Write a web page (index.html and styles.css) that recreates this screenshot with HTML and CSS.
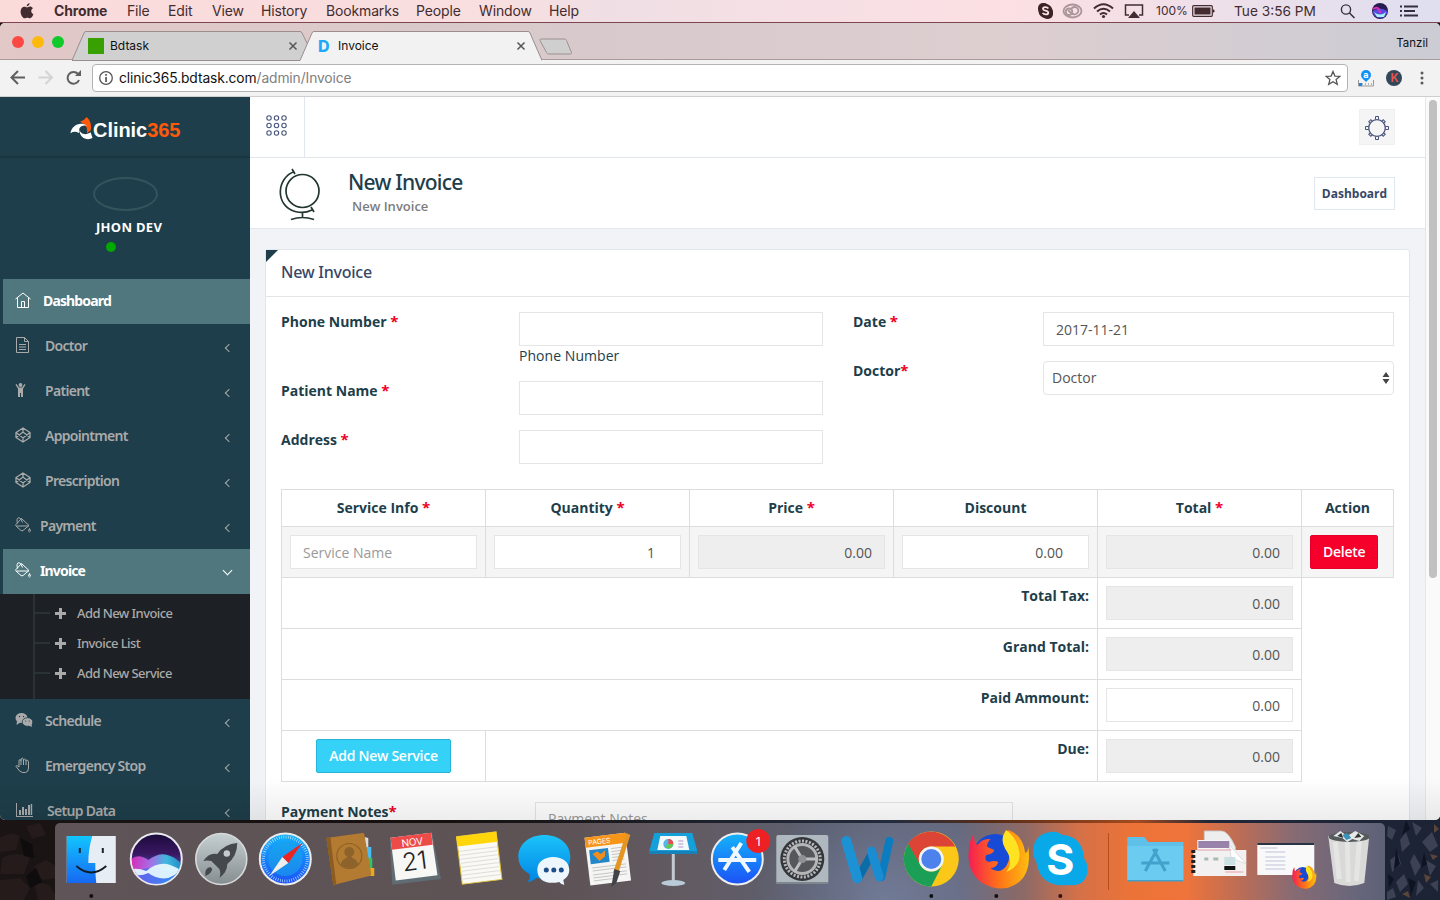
FILE: index.html
```html
<!DOCTYPE html>
<html lang="en">
<head>
<meta charset="utf-8">
<title>Invoice</title>
<link rel="stylesheet" href="styles.css">
</head>
<body>
<div class="desktop">
<svg class="wallpaper" viewBox="0 0 1440 82" preserveAspectRatio="none">
  <defs><linearGradient id="wp"><stop offset="0" stop-color="#1a1415"/><stop offset=".3" stop-color="#15100f"/><stop offset=".62" stop-color="#232c3d"/><stop offset=".69" stop-color="#5a2c18"/><stop offset=".79" stop-color="#a34a20"/><stop offset=".84" stop-color="#1f2738"/><stop offset="1" stop-color="#1c2334"/></linearGradient></defs>
  <path fill="url(#wp)" d="M0 0h1440v82H0z"/>
  <g fill="#241b1a"><path d="M0 20q10-8 20-2l-4 14-16 2zM2 40q14-8 28 0l-6 16H0zM34 48l12-6 10 6v12l-14 2zM0 62l20-2 10 10-6 12H0zM34 64l14 2 7 10v6H38zM26 8l14-3 6 12-14 4z"/></g>
  <g fill="#0f0c0d"><path d="M20 20l12 6 2 14-10-2zM26 58l10-8 6 14-12 6z"/></g>
  <g fill="#3c4254"><path d="M1388 8l8 4-4 10-5-4zM1400 22l6-8 4 12-8 8zM1412 4l10 6-6 8zM1422 24l10-10 6 14-8 6zM1390 42l8-6 3 10-9 8zM1410 44l4-8 7 12-6 10zM1426 42l10 6-6 10zM1396 64l8-8 4 10-8 8zM1418 62l6 8-8 8zM1430 66l8-4v12zM1387 74l6-4 3 9-9 3z"/></g>
  <g fill="#0f1422"><path d="M1396 30l4 16-6 6zM1406 2l4 9-8 6zM1408 60l8 4-5 14zM1424 34l3 12-6 4zM1388 56l6 5-5 9z"/></g>
  <g fill="#5b4438"><path d="M1424 56l7 3-5 6zM1434 6l5 5-5 4zM1402 76l6-3 2 7zM1430 36l8 2-5 4z"/></g>
</svg>

<header class="menubar">
  <svg class="apple" viewBox="0 0 14 17"><path fill="#432c30" d="M9.6 0c.1 1.500-1.300 3.300-2.900 3.300C6.500 1.800 8 .2 9.600 0zM7 4.400c.7 0 1.600-.8 3-.8 1 0 2.200.6 2.900 1.600-2.500 1.500-2 4.900.6 5.900-.5 1.500-2 4.200-3.500 4.200-1 0-1.500-.6-2.700-.6-1.200 0-1.700.6-2.700.6C2.900 15.300.6 11.800.6 8.700c0-3.300 1.900-5 3.800-5 1.100 0 2 .7 2.600.7z"/></svg>
  <nav class="menus"><b>Chrome</b><span>File</span><span>Edit</span><span>View</span><span>History</span><span>Bookmarks</span><span>People</span><span>Window</span><span>Help</span></nav>
  <svg class="status" viewBox="0 0 120 22">
    <rect x="1" y="3" width="11" height="11" rx="5" fill="#3c2426"/><rect x="5" y="7" width="11" height="12" rx="5" fill="#3c2426"/><circle cx="8.500" cy="11" r="7" fill="#3c2426"/><path d="M11.300 8.500C10 6.500 6 6.800 6 8.900c0 2.300 5.300 1.300 5.300 3.800 0 2.200-4.300 2.400-5.600.2" fill="none" stroke="#fbe3e3" stroke-width="1.800"/>
    <g fill="none" stroke="#ab9598" stroke-width="1.800"><ellipse cx="35.500" cy="11" rx="9" ry="6.500"/><circle cx="32" cy="11.800" r="3.300"/><path d="M34 9c3-4 9-1 7 3-1 3-5 3-7 1l-3-3"/></g>
    <g fill="none" stroke="#432c30" stroke-width="2"><path d="M57 8.500q9.500-8.500 19 0M60 11.500q6.500-5.500 13 0M63 14.500q3.500-3 7 0"/></g><circle cx="66.500" cy="16.500" r="1.600" fill="#432c30"/>
    <path d="M92 15h-3.500V5h17v10H102" fill="none" stroke="#432c30" stroke-width="1.500"/><path d="M97 11l6 7H91z" fill="#432c30"/>
  </svg>
  <span class="percent">100%</span>
  <svg class="battery" viewBox="0 0 24 14"><rect x=".7" y="1.700" width="19.600" height="10.600" rx="1" fill="none" stroke="#432c30" stroke-width="1.200"/><path d="M2.500 3.500h16v7h-16zM21 5l2 2-2 2z" fill="#432c30"/></svg>
  <span class="clock">Tue 3:56 PM</span>
  <svg class="tools" viewBox="0 0 82 22"><circle cx="6" cy="9.500" r="4.600" fill="none" stroke="#383040" stroke-width="1.400"/><path d="M9.500 13l5 5" stroke="#383040" stroke-width="1.600"/><circle cx="40" cy="11" r="8" fill="#291c50"/><path d="M32.500 11q7-5 15 0-1 7-8 7-6-1-7-7" fill="#5b4ae0"/><path d="M34 12q6 5 12 0l-2 5h-7z" fill="#a6f3f8"/><path d="M33 9q6-4 7 4" stroke="#e02eb5" fill="none" stroke-width="2"/><g stroke="#342f40" stroke-width="2"><path d="M64 6.500h14M64 11h11M64 15.500h14M60 6.500h2M60 11h2M60 15.500h2"/></g></svg>
</header>

<div class="window">
  <div class="tabstrip">
    <div class="lights"><i class="red"></i><i class="yellow"></i><i class="green"></i></div>
    <div class="tab">
      <svg class="tabshape" viewBox="0 0 236 30"><path d="M0 29.500L12 2q.5-1.500 2-1.500h214q1.500 0 2 1.500l6 12-7 15.500z" fill="#d0d0d0" stroke="#9b8c8e"/></svg>
      <i class="square"></i><span class="title">Bdtask</span><svg class="x" viewBox="0 0 10 10"><path d="M1.500 1.500l7 7M8.500 1.500l-7 7"/></svg>
    </div>
    <div class="tab current">
      <svg class="tabshape" viewBox="0 0 242 30"><path d="M0 29.500L12 2q.5-1.500 2-1.500h214q1.500 0 2 1.500l12 27.500V30H0z" fill="#f2f2f2"/><path d="M0 29.500L12 2q.5-1.500 2-1.500h214q1.500 0 2 1.500l12 27.500" fill="none" stroke="#9b8c8e"/></svg>
      <b class="dlogo">D</b><span class="title">Invoice</span><svg class="x" viewBox="0 0 10 10"><path d="M1.500 1.500l7 7M8.500 1.500l-7 7"/></svg>
    </div>
    <svg class="newtab" viewBox="0 0 34 18"><path d="M2.500 1h23q1.500 0 2 1.500l5 12q.5 1.500-1 1.500H10q-2 0-2.500-1.500L1 2.500Q.6 1 2.500 1z" fill="#cfcfcf" stroke="#9b9092"/></svg>
    <span class="profile">Tanzil</span>
  </div>
  <div class="toolbar">
    <svg class="navicons" viewBox="0 0 82 36"><g fill="none" stroke-width="2"><path d="M25 17.500H12M18 11l-6.500 6.500L18 24" stroke="#5f5f5f"/><path d="M38.500 17.500h13M45.500 11l6.500 6.500-6.500 6.500" stroke="#d3d3d3"/><path d="M79 20a5.900 5.900 0 1 1-1-6" stroke="#5f5f5f"/></g><path d="M81 10v6h-6z" fill="#5f5f5f"/></svg>
    <div class="address">
      <svg class="info" viewBox="0 0 16 16"><circle cx="8" cy="8" r="6.300" fill="none" stroke="#555" stroke-width="1.300"/><path d="M7.200 7h1.700v5H7.200zM7.200 4h1.700v1.700H7.200z" fill="#555"/></svg>
      <span class="url">clinic365.bdtask.com<em>/admin/Invoice</em></span>
      <svg class="star" viewBox="0 0 16 16"><path d="M8 1.500l1.900 4.600 4.900.3-3.700 3.200 1.200 4.800L8 11.800l-4.300 2.600 1.200-4.800L1.200 6.400l4.900-.3z" fill="none" stroke="#555" stroke-width="1.300"/></svg>
    </div>
    <svg class="extensions" viewBox="0 0 76 36"><path d="M1.500 20v6h15v-6" fill="none" stroke="#999"/><path d="M2 23h3v3H2z" fill="#1686e8"/><path d="M5 24h11" stroke="#777" stroke-dasharray="1 2"/><circle cx="9" cy="15" r="5" fill="#1091f5"/><path d="M9 22l-3-3h6z" fill="#1091f5"/><text x="6.300" y="17.600" font-size="9" font-weight="bold" fill="#fff">a</text><circle cx="37" cy="18" r="8" fill="#33475a"/><text x="33.500" y="22.200" font-size="11.500" font-weight="600" fill="#e9574e">K</text><g fill="#5a5a5a"><circle cx="65" cy="13" r="1.500"/><circle cx="65" cy="18" r="1.500"/><circle cx="65" cy="23" r="1.500"/></g></svg>
  </div>

  <div class="page">
    <aside class="sidebar">
      <div class="brand">
        <svg viewBox="0 0 24 24"><path d="M10 5Q14 4 17 0q6 6 4 14l-4 3q2-8-7-12z" fill="#ff5a0a"/><path d="M0 17C1 9 10 4 17 9c-6-1-9 2-8 8-3-2-6-2-9 0z" fill="#fff"/><path d="M9 12c1 7 8 7 12 4l2 6c-6 3-14 0-14-10z" fill="#fff"/></svg><b>Clinic<span>365</span></b>
      </div>
      <div class="user"><i class="avatar"></i><b>JHON DEV</b><i class="online"></i></div>
      <nav class="side">
        <a class="item on t43"><svg viewBox="0 0 16 16"><path d="M.5 7L8 1l7.500 6M2.500 6v9.500h11V6M6.500 15V9.500h3V15"/></svg><span>Dashboard</span></a>
        <a class="item"><svg viewBox="0 0 16 16"><path d="M1.500.5h8l4 4v11h-12zM9.500.5v4h4M4 7.500h7M4 10h7M4 12.500h7"/></svg><span>Doctor</span><i class="chev"></i></a>
        <a class="item"><svg viewBox="0 0 16 16"><g class="solid"><circle cx="5.500" cy="3" r="1.900"/><path d="M1.500 2l2.500 3.500h3L9.500 2l1 .7-2.500 4V15H6v-4H5v4H3V6.700l-2.500-4z"/></g></svg><span>Patient</span><i class="chev"></i></a>
        <a class="item"><svg viewBox="0 0 16 16"><path d="M8 1l7 4.500v5L8 15l-7-4.500v-5zM8 1v4M8 11v4M1 5.500L8 11l7-5.500M1 10.500L8 5l7 5.500" class="heavy"/></svg><span>Appointment</span><i class="chev"></i></a>
        <a class="item"><svg viewBox="0 0 16 16"><path d="M8 1l7 4.500v5L8 15l-7-4.500v-5zM8 1v4M8 11v4M1 5.500L8 11l7-5.500M1 10.500L8 5l7 5.500" class="heavy"/></svg><span>Prescription</span><i class="chev"></i></a>
        <a class="item t40"><svg viewBox="0 0 16 16"><path d="M6.500 1.500l7.500 7-6 5q-1 .7-2 0L1 9q-.7-.8 0-1.500zM1.500 9h12M2.500 6.500Q1 1 4 .7q2 0 3.500 4.800M14.500 11.500q-2 3.500 0 3.500t0-3.500"/></svg><span>Payment</span><i class="chev"></i></a>
        <a class="item on t40"><svg viewBox="0 0 16 16"><path d="M6.500 1.500l7.500 7-6 5q-1 .7-2 0L1 9q-.7-.8 0-1.500zM1.500 9h12M2.500 6.500Q1 1 4 .7q2 0 3.500 4.800M14.500 11.500q-2 3.500 0 3.500t0-3.500"/></svg><span>Invoice</span><i class="chev down"></i></a>
        <div class="sub"><a><i class="plus"></i>Add New Invoice</a><a><i class="plus"></i>Invoice List</a><a><i class="plus"></i>Add New Service</a></div>
        <a class="item"><svg class="wide" viewBox="0 0 18 16"><g class="solid"><ellipse cx="6.500" cy="6" rx="6" ry="5"/><path d="M2 9l-.5 4L6 10z"/><ellipse class="rim" cx="12.500" cy="10" rx="5.300" ry="4.300"/><path d="M13 13l4 2-.5-4z"/></g><g class="eyes"><circle cx="4.500" cy="4.500" r=".7"/><circle cx="8.500" cy="4.500" r=".7"/><circle cx="10.700" cy="9" r=".6"/><circle cx="14.200" cy="9" r=".6"/></g></svg><span>Schedule</span><i class="chev"></i></a>
        <a class="item"><svg viewBox="0 0 16 16"><path d="M4 10V4q0-1.500 1-1.500T6 4q0-3 1.200-3T8.500 4q0-2.500 1.200-2T11 4q0-1 1-1t1.500 2v6q0 4-3 4.500H7.500Q5 15.500 1 9.500q0-2 3 .5M6 4v4M8.500 4v4M11 4v4"/></svg><span>Emergency Stop</span><i class="chev"></i></a>
        <a class="item t47"><svg class="wide" viewBox="0 0 18 16"><g class="solid"><path d="M1 1h1v13h16v1H1zM4 8h2v5H4zM7 5h2v8H7zM10 7h2v6h-2zM13 3h2v10h-2zM15.700 2h1.500v11h-1.500z"/></g></svg><span>Setup Data</span><i class="chev"></i></a>
      </nav>
    </aside>
    <main class="main">
      <div class="topnav">
        <div class="grid-btn"><svg viewBox="0 0 21 21"><g fill="none" stroke="#4a567e" stroke-width="1.100"><circle cx="3" cy="3" r="2.200"/><circle cx="10.500" cy="3" r="2.200"/><circle cx="18" cy="3" r="2.200"/><circle cx="3" cy="10.500" r="2.200"/><circle cx="10.500" cy="10.500" r="2.200"/><circle cx="18" cy="10.500" r="2.200"/><circle cx="3" cy="18" r="2.200"/><circle cx="10.500" cy="18" r="2.200"/><circle cx="18" cy="18" r="2.200"/></g></svg></div>
        <div class="gear"><svg viewBox="-12 -12 24 24"><g fill="none" stroke="#48537b"><circle r="8.300" stroke-width="1.300"/><path d="M-1.500-8.500v-3h3v3M-1.500 8.500v3h3v-3M-8.500-1.500h-3v3h3M8.500-1.500h3v3h-3"/><g transform="rotate(45)"><path d="M-1.500-8v-2.200h3V-8M-1.500 8v2.200h3V8M-8-1.500h-2.200v3H-8M8-1.500h2.200v3H8"/></g></g></svg></div>
      </div>
      <div class="pagehead">
        <svg class="globe" viewBox="0 0 42 54"><g fill="none" stroke="#22372f" stroke-width="1.700"><circle cx="23.500" cy="24" r="16.500"/><path d="M15.500 4.500C-3 11-4 39 16 44.500q9 2.500 17-1.500M13 2l3 5M32 40l3 5M23.500 45.500v5M12 52.500q11.500-4 23 0"/></g></svg>
        <div class="titles"><h1>New Invoice</h1><small>New Invoice</small></div>
        <a class="crumb">Dashboard</a>
      </div>
      <section class="panel">
        <h2>New Invoice</h2>
        <div class="body">
          <div class="form">
            <div class="col left">
              <div class="row"><label>Phone Number <i>*</i></label><div><div class="field"></div><p>Phone Number</p></div></div>
              <div class="row"><label>Patient Name <i>*</i></label><div class="field"></div></div>
              <div class="row"><label>Address <i>*</i></label><div class="field"></div></div>
            </div>
            <div class="col right">
              <div class="row"><label>Date <i>*</i></label><div class="field">2017-11-21</div></div>
              <div class="row"><label>Doctor<i>*</i></label><div class="field select">Doctor<svg viewBox="0 0 8 14"><path d="M4 1l3.500 5h-7zM4 13l3.500-5h-7z" fill="#444"/></svg></div></div>
            </div>
          </div>
          <table class="services">
            <colgroup><col class="c"><col class="c"><col class="c"><col class="c"><col class="c"><col class="a"></colgroup>
            <tr><th>Service Info <i>*</i></th><th>Quantity <i>*</i></th><th>Price <i>*</i></th><th>Discount</th><th>Total <i>*</i></th><th>Action</th></tr>
            <tr class="entry"><td><div class="field hint">Service Name</div></td><td><div class="field num spin">1</div></td><td><div class="field num off">0.00</div></td><td><div class="field num spin">0.00</div></td><td><div class="field num off">0.00</div></td><td><a class="btn danger">Delete</a></td></tr>
            <tr><td colspan="4" class="sum">Total Tax:</td><td><div class="field num off">0.00</div></td></tr>
            <tr><td colspan="4" class="sum">Grand Total:</td><td><div class="field num off">0.00</div></td></tr>
            <tr><td colspan="4" class="sum">Paid Ammount:</td><td><div class="field num">0.00</div></td></tr>
            <tr><td class="mid"><a class="btn add">Add New Service</a></td><td colspan="3" class="sum">Due:</td><td><div class="field num off">0.00</div></td></tr>
          </table>
          <div class="notes"><label>Payment Notes<i>*</i></label><div class="field hint">Payment Notes</div></div>
        </div>
      </section>
    </main>
    <div class="scroll"><i></i></div>
  </div>
  <div class="fade"></div>
</div>

<footer class="dock">
  <svg viewBox="-32.300 -36 64.600 77"><defs>
    <linearGradient id="fb" x2="0" y2="1"><stop offset="0" stop-color="#12c5ff"/><stop offset="1" stop-color="#1668f2"/></linearGradient>
    <linearGradient id="gr" x2="0" y2="1"><stop offset="0" stop-color="#c6d0d2"/><stop offset="1" stop-color="#868d90"/></linearGradient>
    <linearGradient id="sk" x2="0" y2="1"><stop offset="0" stop-color="#1cc3fa"/><stop offset="1" stop-color="#0086e6"/></linearGradient>
    <linearGradient id="as" x2="0" y2="1"><stop offset="0" stop-color="#14b4fa"/><stop offset="1" stop-color="#1c50f6"/></linearGradient></defs>
    <path d="M-24.500-23h49v47h-49z" fill="#e6edf5"/><path d="M-24.500-23H1q-4 13-4 27h7q0 12 1 20h-29.500z" fill="url(#fb)"/><path d="M-11.500-11v5M11.500-11v5" stroke="#17232f" stroke-width="2"/><path d="M-15 7q15 13 30 0" fill="none" stroke="#111c28" stroke-width="1.800"/><circle cy="37" r="2" fill="#111"/></svg>
  <svg viewBox="-32.300 -36 64.600 77"><defs><linearGradient id="si" x2="0" y2="1"><stop offset="0" stop-color="#1b0a3a"/><stop offset=".4" stop-color="#3a1762"/><stop offset="1" stop-color="#4c8cf0"/></linearGradient><linearGradient id="wv"><stop offset="0" stop-color="#f02ac0"/><stop offset=".4" stop-color="#b57bf6"/><stop offset=".7" stop-color="#3fd0ee"/><stop offset="1" stop-color="#1d9ad0"/></linearGradient><clipPath id="disc"><circle r="24.800"/></clipPath></defs><circle r="25.500" fill="url(#si)" stroke="#e9e9ef" stroke-width="2"/><g clip-path="url(#disc)"><path d="M-25 0Q-18-6-8 1 4-8 14-3q6 2 11 8L22 26h-44z" fill="url(#wv)" opacity=".85"/><path d="M-25 16Q-10 6 4 10t21 4v12h-50z" fill="#3a6cf2" opacity=".75"/><path d="M-25 10q8-1 15 2Q2 2 14 6q6 2 11 6-8 5-13 7-11 2-20-5-8 4-17 1z" fill="#e9faff" opacity=".92"/></g></svg>
  <svg viewBox="-32.300 -36 64.600 77"><circle r="25.500" fill="url(#gr)" stroke="#d7dada" stroke-width="1.600"/><path d="M16-16Q3-15-4-5q-8-2-14 7 4-1 8 0l8 8q2 4 0 9 8-6 8-14Q16-3 16-16zM-11 8q-6 1-5 9 6-2 7-7z" fill="#45484c"/><circle cx="5.500" cy="-5.500" r="3.200" fill="#c5cccf"/></svg>
  <svg viewBox="-32.300 -36 64.600 77"><circle r="25.500" fill="url(#as)" stroke="#ececec" stroke-width="2"/><circle r="17" fill="#19a4ea" opacity=".6"/><circle r="22" fill="none" stroke="#c9edff" stroke-width="3" stroke-dasharray=".6 1.700"/><path d="M17-16L3 4l-6-6z" fill="#ee2424"/><path d="M-16 17L-3-2l6 6z" fill="#eee"/></svg>
  <svg viewBox="-32.300 -36 64.600 77"><path d="M14-22l4 1v10h-4z" fill="#ddd"/><path d="M16-12h5v11h-5z" fill="#49bdf2"/><path d="M17-1h5v10h-5z" fill="#2ec564"/><path d="M18 9h6v8h-6z" fill="#eda823"/><path d="M-24-21L12-26q2 0 2 1l7 40q0 2-2 2l-36 9z" fill="#b27b31"/><path d="M-24-21l4-1 6 48-3 1z" fill="#8d5c20"/><circle cx="-1" cy="-3" r="12.500" fill="none" stroke="#8c6027" stroke-width="1.200"/><circle cx="-1" cy="-7" r="5" fill="#8e632b"/><path d="M-10 6Q-8 0-4-1-4-3-1-3t3 2q4 1 6 6-8 8-18 1z" fill="#8e632b"/></svg>
  <svg viewBox="-32.300 -36 64.600 77"><g transform="rotate(-7)"><path d="M-22-22h43l3 45h-49z" fill="#606c74"/><path d="M-21-24h41l1 43h-42z" fill="#f7f7f6"/><path d="M-21-24h41v12h-41z" fill="#ed4b47"/><text y="-13.500" text-anchor="middle" font-size="10" fill="#fff">NOV</text><text y="11" text-anchor="middle" font-size="25" font-weight="300" fill="#222">21</text></g></svg>
  <svg viewBox="-32.300 -36 64.600 77"><g transform="rotate(-7)"><path d="M-20-25h40v48h-40z" fill="#faf9f4" stroke="#dfbf3c"/><path d="M-20-25h40v10h-40z" fill="#ffd60c"/><path d="M-19-10h38M-19-6h38M-19-2h38M-19 2h38M-19 6h38M-19 10h38M-19 14h38M-19 18h38" stroke="#d8d8d8" stroke-width=".8"/></g></svg>
  <svg viewBox="-32.300 -36 64.600 77"><path d="M0-24c15 0 26 9 26 22S15 20 0 20l-8-1q-3 3-9 4 4-4 2-8-11-6-11-17C-26-15-15-24 0-24z" fill="url(#sk)"/><path d="M9-2c9 0 16 5 16 13q0 6-6 10l1 5q-4-1-5-3C2 26-7 21-7 11-7 3 0-2 9-2z" fill="#edf6fd"/><g fill="#1d4e8a"><circle cx="2" cy="11" r="2.500"/><circle cx="9.500" cy="11" r="2.500"/><circle cx="17" cy="11" r="2.500"/></g></svg>
  <svg viewBox="-32.300 -36 64.600 77"><g transform="rotate(-7)"><path d="M-21-24h41v48h-41z" fill="#f5f5f4"/><path d="M-21-24h41v10h-41z" fill="#f79518"/><text x="-18" y="-16" font-size="7" fill="#fff">PAGES</text><path d="M-18-11h19v14h-19z" fill="#2187c9"/><path d="M-15-7l5-2 3 3 5-3-1 6-6 4z" fill="#f08c1b"/><path d="M4-10h12M4-7h12M4-4h12M4-1h12M4 2h12M-17 7h34M-17 10h34M-17 14h34M-17 17h34M-17 20h20" stroke="#bbb" stroke-width=".8"/></g><path d="M18-26l4 2-12 38-5-1z" fill="#e59522"/><path d="M6 10l6 2-4 12-5 4z" fill="#404347"/></svg>
  <svg viewBox="-32.300 -36 64.600 77"><path d="M-19-26h38l5 18h-48z" fill="#159fdb"/><path d="M-24-8h48v3h-48z" fill="#1781b9"/><path d="M-13-23h26l3 14h-32z" fill="#f4f9fa"/><circle cx="-5" cy="-15" r="5" fill="#50b8e9"/><path d="M-5-15v-5q5 0 5 5z" fill="#e64e53"/><path d="M-5-15H0q-2 7-8 3z" fill="#66c64b"/><path d="M5-18h5M5-15h5M5-12h5" stroke="#b497cf"/><path d="M-1.500-5h3v29h-3z" fill="#c2cbd2"/><ellipse cy="24" rx="12" ry="3" fill="#b8cbd7"/></svg>
  <svg viewBox="-32.300 -36 64.600 77"><circle r="25.500" fill="url(#as)" stroke="#eee" stroke-width="2"/><g stroke="#eef8fe" stroke-width="4"><path d="M-13 11L4-16M-5-12l17 25M-19 1h38"/></g><circle cx="21" cy="-18" r="12" fill="#ed2024"/><text x="21" y="-13.500" text-anchor="middle" font-size="12" fill="#fff">1</text></svg>
  <svg viewBox="-32.300 -36 64.600 77"><rect x="-26" y="-24" width="52" height="49" rx="2" fill="#aeb8be"/><path d="M-26 23h52v2h-52z" fill="#7d878e"/><circle r="22" fill="#34363a"/><circle r="18" fill="none" stroke="#b5b8ba" stroke-width="3" stroke-dasharray="2 1.500"/><circle r="14.500" fill="#54575b" stroke="#b3b5b6" stroke-width="3"/><path d="M0 0h15M0 0l-8-13M0 0l-8 13" stroke="#bbbdbe" stroke-width="3"/><circle r="4" fill="#8e9193"/></svg>
  <svg viewBox="-32.300 -36 64.600 77"><g fill="none" stroke-linecap="round"><path d="M-9 19L5-6" stroke="#0b6da8" stroke-width="8"/><path d="M14 18l8-36" stroke="#0a7cc0" stroke-width="8"/><path d="M-21-18l11 37" stroke="#1c91d4" stroke-width="10"/><path d="M4-8l8 26" stroke="#1a8dd2" stroke-width="9"/></g></svg>
  <svg viewBox="-32.300 -36 64.600 77"><circle r="27.500" fill="#fbc719"/><path d="M-24-14A27.500 27.500 0 0 1 24-12.500H0A12.500 12.500 0 0 0-11 6z" fill="#dc4436"/><path d="M-23-15-11 6A12.500 12.500 0 0 0 11 6L0 27.500A27.500 27.500 0 0 1-23-15z" fill="#1b9f57"/><circle r="12.500" fill="#f1f5f8"/><circle r="10" fill="#4d82ed"/><circle cy="37" r="2" fill="#111"/></svg>
  <svg viewBox="-32.300 -36 64.600 77"><g id="fox"><defs><linearGradient id="ff" x1="0" x2="1"><stop offset="0" stop-color="#f51e52"/><stop offset=".5" stop-color="#ff7219"/><stop offset="1" stop-color="#ffbd10"/></linearGradient></defs><circle cx="-1" cy="-2" r="23" fill="#174bd6"/><path d="M-22-24q-1 7 3 10Q-14-21-6-20q-4 5-3 8l7 3q-1 4-8 5-3 6 3 7 5-2 9 0-2 6-8 6 9 7 16-2 6-9 0-20-4-9 2-16 14 4 17 23 3-1 3-7 4 30-14 39-14 8-32-2-17-12-13-36 0-6 4-12z" fill="url(#ff)"/><path d="M10-29q11 8 13 22 2 14-13 20Q18 2 9-10 3-20 10-29z" fill="#ffe221"/></g><circle cy="37" r="2" fill="#111"/></svg>
  <svg viewBox="-32.300 -36 64.600 77"><path d="M-10-27q7-1 12 3Q22-23 24 0q4 5 3 14Q24 28 8 26-20 29-24 3-30-7-25-18q5-8 15-9z" fill="#08a8e9"/><text y="15.500" text-anchor="middle" font-size="43" font-weight="700" fill="#fff">S</text><circle cy="37" r="2" fill="#311"/></svg>
  <i class="divider"></i>
  <svg viewBox="-32.300 -36 64.600 77"><path d="M-28-22h17l4 5h35v39h-56z" fill="#5fc0e9"/><path d="M-28-13h56v35h-56z" fill="#6bcbf0"/><path d="M-10 12L2-10M-2-10l12 22M-14 4h28" stroke="#42a2cc" stroke-width="3"/><path d="M-28 21h56v1.500h-56z" fill="#429fc8"/></svg>
  <svg viewBox="-32.300 -36 64.600 77"><path d="M-16-28H1q7 0 14 16v14h-31z" fill="#eee" stroke="#ccc"/><path d="M-23-19h29v30h-29z" fill="#f7f7f8"/><path d="M-22-18H9v7h-31z" fill="#9a83aa"/><path d="M-27-9h53v26h-53z" fill="#f2f0f0"/><path d="M9-14L26 5l-15-6z" fill="#fff" stroke="#ccc" stroke-width=".6"/><path d="M-27-9v25" stroke="#222" stroke-width="4" stroke-dasharray="3 2"/><path d="M-23-9H11" stroke="#e2a2ab"/><path d="M4-2h11v8H4z" fill="#cbe0e2"/><path d="M4 7h11v4H4z" fill="#111"/><path d="M-16 0h4M-7 0h5" stroke="#a5bdb1" stroke-width="3"/><path d="M5 13h18" stroke="#f0a0a8"/></svg>
  <svg viewBox="-32.300 -36 64.600 77"><path d="M-28-16h57v32h-57z" fill="#f9f9fa"/><path d="M-28-16h57v2h-57z" fill="#283345"/><path d="M-25-11h17M-20-7h20M-20-2H0M-20 2H0M-20 6H0M-20 10H0" stroke="#b1b6d2" stroke-width=".8"/><use href="#fox" transform="translate(18 18) scale(.4)"/></svg>
  <svg viewBox="-32.300 -36 64.600 77"><path d="M-21-23h41l-5 47q-15 6-30 0z" fill="#d9d9d7"/><path d="M-14-17l4 37M-2-18l1 41M10-18L7 22" stroke="#e4e5e4" stroke-width="5"/><ellipse cy="-22" rx="20.500" ry="5" fill="#555a5b"/><path d="M-16-23l7-5 7 5 8-5 9 5-5 5-7-2-5 3-5-4z" fill="#e5e8e7"/><path d="M-12-23l4-3 2 5zM5-21l4-5 3 4z" fill="#333"/><path d="M-7-24l5-2 4 5-5 2z" fill="#3a91bb"/></svg>
</footer>
</div>
</body>
</html>
```
FILE: styles.css
```css
* { box-sizing: border-box; }
body { margin: 0; overflow: hidden; font: 14px/20px "Open Sans", sans-serif; color: #1d3e4a; }
i, em { font-style: normal; }
svg { display: block; flex: none; }
.desktop { position: relative; width: 1440px; height: 900px; overflow: hidden; background: #1a1415; }
.wallpaper { position: absolute; left: 0; top: 818px; width: 1440px; height: 82px; }

.menubar { display: flex; align-items: center; height: 23px; padding-left: 20px; border-bottom: 1px solid #7c4650; background: linear-gradient(90deg, #fbdada, #f8dfe0 35%, #efdfe5 42%, #fce0e3 70%, #dfdff0); color: #432c30; font: 14px/22px Inter, sans-serif; white-space: nowrap; }
.apple { width: 14px; height: 17px; margin-right: 20px; }
.menus { display: grid; grid-template-columns: 73px 41px 44px 49px 65px 90px 63px 70px 40px; letter-spacing: -.15px; }
.menus b { font-weight: 700; }
.status { width: 120px; height: 22px; margin-left: 448px; }
.percent { width: 36px; font-size: 12px; margin-left: -1px; }
.battery { width: 24px; height: 14px; }
.clock { width: 84px; margin-left: 18px; font-size: 13.700px; }
.tools { width: 82px; height: 22px; margin-left: 22px; }

.window { position: relative; height: 797px; border-radius: 5px; overflow: hidden; background: #f2f2f2; }
.tabstrip { display: flex; height: 37px; padding: 8px 12px 0; background: linear-gradient(90deg, #e2c8c7, #d8cacc 40%, #ddced0 70%, #cbccd4); border-bottom: 1px solid #a99a9c; font: 12.500px/16px Inter, sans-serif; color: #111; }
.lights { display: flex; gap: 8px; width: 60px; padding-top: 5px; }
.lights i { width: 12px; height: 12px; border-radius: 50%; }
.red { background: #fc4943; }
.yellow { background: #fdb90c; }
.green { background: #10c92b; }
.tab { position: relative; display: flex; align-items: center; flex: none; width: 236px; height: 29px; padding: 0 10px 0 16px; }
.tab.current { width: 242px; height: 30px; margin-left: -8px; padding: 0 16px 0 17px; }
.tabshape { position: absolute; left: 0; top: 0; width: 100%; height: 30px; z-index: 0; }
.tab > :not(.tabshape) { position: relative; }
.square { width: 16px; height: 16px; background: #38a000; }
.dlogo { width: 16px; padding-left: 1px; color: #1eaafc; font-size: 16px; font-weight: 800; }
.title { flex: 1; margin-left: 6px; font-size: 12px; }
.current .title { margin-left: 5px; }
.x { width: 10px; height: 10px; stroke: #555; stroke-width: 1.500; }
.newtab { width: 34px; height: 18px; margin: 7px 0 0 -3px; }
.profile { margin: 4px 0 0 auto; font-size: 11.500px; }

.toolbar { display: flex; height: 37px; border-bottom: 1px solid #cfcfcf; background: #f2f2f2; font-family: Inter, sans-serif; }
.navicons { width: 82px; height: 36px; }
.address { display: flex; align-items: center; width: 1256px; height: 28px; margin: 4px 0 0 10px; padding: 0 6px 0 5px; border: 1px solid #b3b3b3; border-radius: 4px; background: #fff; }
.info { width: 16px; height: 16px; }
.url { flex: 1; margin-left: 5px; font-size: 13.800px; letter-spacing: -.1px; color: #111; }
.url em { color: #808080; }
.star { width: 16px; height: 16px; }
.extensions { width: 76px; height: 36px; margin-left: 9px; }

.page { display: flex; height: 723px; overflow: hidden; }
.sidebar { flex: none; width: 250px; height: 723px; overflow: hidden; background: #1d3e4a; color: #aaa; font-family: "Noto Sans", sans-serif; }
.brand { display: flex; height: 61px; padding: 20px 0 0 70px; border-bottom: 2px solid #19353f; }
.brand svg { width: 24px; height: 23px; }
.brand b { margin-left: -1px; font: bold 20px/26px "Liberation Sans", sans-serif; color: #fff; letter-spacing: -.05px; }
.brand span { color: #ff5a0a; }
.user { display: flex; flex-direction: column; height: 121px; padding: 19px 0 0 93px; }
.avatar { width: 65px; height: 34px; border: 2px solid #34545d; border-radius: 50%; }
.user b { margin: 6px 0 0 3px; font: 700 13px/20px "Noto Sans", sans-serif; letter-spacing: .3px; color: #fff; white-space: nowrap; }
.online { width: 10px; height: 10px; margin: 5px 0 0 13px; border-radius: 50%; background: #00a800; }
.item { display: flex; height: 45px; padding: 12px 0 0 15px; color: #aaa; }
.item svg { width: 16px; height: 16px; margin-top: 1px; fill: none; stroke: currentColor; stroke-width: 1; }
.item svg.wide { width: 18px; margin-right: -2px; }
.item .solid { fill: currentColor; stroke: none; }
.item .rim { stroke: #1d3e4a; stroke-width: .8; }
.item .eyes { fill: #1d3e4a; stroke: none; }
.item .heavy { stroke-width: 1.300; }
.item span { flex: 1; margin-left: 14px; font: 600 14px/20px "Noto Sans", sans-serif; letter-spacing: -.7px; }
.item.t40 span { margin-left: 9px; }
.item.t43 span { margin-left: 12px; }
.item.t47 span { margin-left: 16px; }
.item.on { padding-left: 12px; border-left: 3px solid #1d3e4a; background: #50777d; color: #fff; }
.item.on span { font-weight: 700; letter-spacing: -.85px; }
.chev { width: 6px; height: 6px; margin: 9px 18px 0 0; border: solid #aaa; border-width: 0 0 1.300px 1.300px; transform: rotate(45deg); }
.chev.down { width: 7px; height: 7px; margin-top: 6px; margin-right: 19px; border-color: #fff; transform: rotate(-45deg); }
.sub { height: 105px; padding-top: 4px; background: linear-gradient(#2a3236, #2a3236) 33px 0 / 2px 100% no-repeat #1d2024; }
.sub a { display: flex; align-items: center; height: 30px; padding-left: 35px; font: 500 13px/20px "Noto Sans", sans-serif; letter-spacing: -.58px; }
.sub a::before { content: ""; width: 15px; height: 2px; background: #2a3236; }
.plus { width: 11px; height: 11px; margin: 0 11px 0 5px; background: linear-gradient(#aaa, #aaa) 4px 0 / 3px 100% no-repeat, linear-gradient(#aaa, #aaa) 0 4px / 100% 3px no-repeat; }

.main { flex: none; width: 1175px; background: #f1f3f6; }
.topnav { display: flex; justify-content: space-between; height: 61px; padding-right: 30px; background: #fff; border-bottom: 1px solid #e1e6ef; }
.grid-btn { width: 55px; padding: 18px 0 0 16px; border-right: 1px solid #e1e6ef; }
.grid-btn svg { width: 21px; height: 21px; }
.gear { width: 36px; height: 36px; margin-top: 12px; padding: 6px; background: #f5f5f5; border: 1px solid #f0f0f0; }
.gear svg { width: 24px; height: 24px; margin: 0 -1px; }
.pagehead { display: flex; height: 71px; padding: 0 30px 0 29px; background: #fff; border-bottom: 1px solid #e1e6ef; }
.globe { width: 42px; height: 54px; margin-top: 9px; }
.titles { flex: 1; padding: 9px 0 0 28px; }
h1 { margin: 0 0 0 -1px; font: 500 21px/30px "Noto Sans", sans-serif; letter-spacing: -.75px; }
small { display: block; margin: 0 0 0 3px; font: 600 13px/18px "Open Sans", sans-serif; color: #7c7c7c; }
.crumb { width: 81px; height: 33px; margin-top: 19px; border: 1px solid #e1e6ef; text-align: center; font: 700 12px/31px "Open Sans", sans-serif; color: #374767; }
.panel { position: relative; width: 1145px; height: 700px; margin: 20px 0 0 15px; border: 1px solid #e1e6ef; border-radius: 3px; background: #fff; }
.panel::before { content: ""; position: absolute; left: 0; top: 0; border-top: 12px solid #1d3e4a; border-right: 12px solid transparent; }
h2 { height: 47px; margin: 0; padding: 12px 15px; border-bottom: 1px solid #e4e5e7; font: 500 16px/20px "Noto Sans", sans-serif; letter-spacing: -.25px; color: #374767; }
.body { padding: 15px 15px; }
.form { display: flex; }
.left { width: 542px; margin-right: 30px; }
.right { width: 541px; }
.row { display: grid; grid-template-columns: 238px 1fr; margin-bottom: 15px; }
.right .row { grid-template-columns: 190px 1fr; }
label { font-weight: 700; }
label i, th i { color: #f00028; font-size: 15px; line-height: 18px; }
p { margin: 0; letter-spacing: .05px; }
.field { height: 34px; padding: 7px 12px 5px; border: 1px solid #e4e5e7; background: #fff; color: #555; font-weight: 400; }
.select { display: flex; align-items: center; justify-content: space-between; padding: 0 3px 0 8px; border-radius: 4px; }
.select svg { width: 8px; height: 14px; }
.hint { color: #999; }
.num { text-align: right; }
.spin { padding-right: 25px; }
.off { background: #eee; }
.services { width: 1113px; margin: 10px 0 20px; table-layout: fixed; border-collapse: collapse; border-spacing: 0; }
.c { width: 204px; }
.a { width: 92px; }
.services td, .services th { padding: 8px; border: 1px solid #ddd; vertical-align: top; }
.services th { text-align: center; font-weight: 700; }
.entry { background: #f5f5f5; }
.sum { text-align: right; font-weight: 700; }
.mid { text-align: center; }
.btn { display: inline-block; height: 34px; padding: 6px 12px; border-radius: 2px; border: 1px solid; color: #fff; font-weight: 600; letter-spacing: -.28px; vertical-align: top; white-space: nowrap; }
.danger { background: #f6002b; border-color: #e50029; }
.add { background: #35d1f7; border-color: #25b5d8; }
.notes { display: grid; grid-template-columns: 254px 478px; }
.notes .field { height: 60px; padding-top: 6px; }
.scroll { width: 15px; padding: 3px 0 0 3px; border-left: 1px solid #e6e6e6; background: #fafafa; }
.scroll i { display: block; width: 8px; height: 478px; border-radius: 4px; background: #c1c1c1; }
.fade { position: absolute; left: 0; right: 0; bottom: 0; height: 42px; background: linear-gradient(transparent, rgba(0,0,0,.07)); }

.dock { position: absolute; left: 55px; top: 823px; display: flex; width: 1330px; height: 77px; padding-left: 4.400px; border-radius: 5px 5px 0 0; background: radial-gradient(ellipse 130px 110px at 830px 100%, rgba(125,138,172,.6), transparent), linear-gradient(90deg, #5f5457, #5d5254 36%, #625b63 48%, #5b5f70 58%, #64677c 68%, #8f6a66 73%, #d57148 77%, #ec7337 81%, #ef743b 85%, #bd6d55 89%, #886b73 93%, #66667b 98%, #5e6076); font-family: Inter, sans-serif; }
.dock svg { width: 64.600px; height: 77px; overflow: visible; }
.divider { flex: none; width: 1px; height: 57px; margin: 10px 14px 0 15.600px; background: #b14d20; }
```
